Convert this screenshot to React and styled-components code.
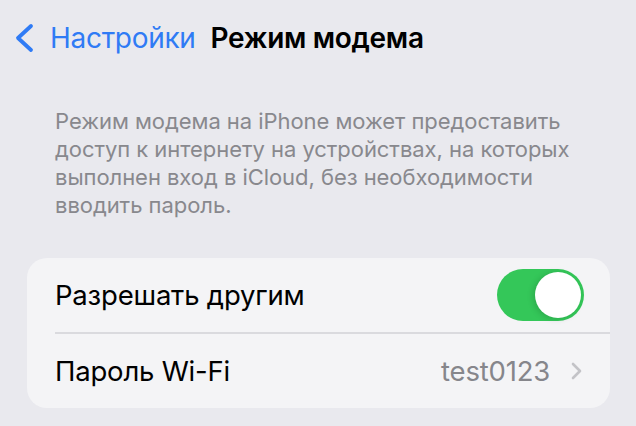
import React from 'react';
import styled, { createGlobalStyle } from 'styled-components';

const GlobalStyle = createGlobalStyle`
  html, body {
    margin: 0;
    padding: 0;
    background: #e9e9ee;
  }
  body {
    font-family: Inter, 'Noto Sans', sans-serif;
    -webkit-font-smoothing: antialiased;
  }
`;

const Page = styled.div`
  width: 636px;
  height: 426px;
  overflow: hidden;
  background: #e9e9ee;
`;

const NavBar = styled.div`
  display: flex;
  align-items: center;
  height: 40px;
  padding: 18px 0 0 14px;
`;

const BackButton = styled.div`
  display: flex;
  align-items: center;
  gap: 15px;
  color: #2f7bf5;
  font-size: 28px;
  letter-spacing: -0.3px;
`;

const Title = styled.div`
  margin-left: 15px;
  font-size: 28px;
  font-weight: 600;
  color: #000;
  letter-spacing: -0.3px;
`;

const Footnote = styled.p`
  margin: 49px 0 0 55px;
  width: 540px;
  font-size: 22px;
  line-height: 28px;
  color: #88888d;
  letter-spacing: -0.05px;
`;

const Card = styled.div`
  margin: 39px 26px 0 27px;
  background: #f4f4f6;
  border-radius: 20px;
  overflow: hidden;
`;

const Row = styled.div`
  display: flex;
  align-items: center;
  height: ${(p) => p.h}px;
  padding: 0 26px 0 28px;
`;

const Divider = styled.div`
  height: 1.5px;
  margin-left: 28px;
  background: #dadade;
`;

const Label = styled.div`
  flex: 1;
  font-size: 27.5px;
  color: #000;
  letter-spacing: -0.2px;
`;

const Value = styled.div`
  font-size: 27.5px;
  color: #86868b;
  margin-right: 20px;
  letter-spacing: -0.2px;
`;

const Toggle = styled.div`
  width: 87px;
  height: 52px;
  border-radius: 26px;
  background: #34c759;
  display: flex;
  align-items: center;
  justify-content: flex-end;
  padding: 0 3px;
  box-sizing: border-box;
`;

const Knob = styled.div`
  width: 46px;
  height: 46px;
  border-radius: 50%;
  background: #fff;
  box-shadow: -2px 1px 6px rgba(0, 0, 0, 0.15);
`;

const BackChevron = () => (
  <svg width="21" height="30" viewBox="0 0 21 30">
    <path d="M17 3 L4 15 L17 27" fill="none" stroke="#2f7bf5" strokeWidth="3.8" strokeLinecap="round" strokeLinejoin="round" />
  </svg>
);

const RowChevron = () => (
  <svg width="14" height="18" viewBox="0 0 14 18">
    <path d="M3 2 L10 9 L3 16" fill="none" stroke="#c3c3c7" strokeWidth="2.6" strokeLinecap="round" strokeLinejoin="round" />
  </svg>
);

export default function App() {
  return (
    <Page>
      <GlobalStyle />
      <NavBar>
        <BackButton>
          <BackChevron />
          Настройки
        </BackButton>
        <Title>Режим модема</Title>
      </NavBar>

      <Footnote>
        Режим модема на iPhone может предоставить доступ к интернету на устройствах, на которых выполнен вход в iCloud, без необходимости вводить пароль.
      </Footnote>

      <Card>
        <Row h={74}>
          <Label>Разрешать другим</Label>
          <Toggle>
            <Knob />
          </Toggle>
        </Row>
        <Divider />
        <Row h={74}>
          <Label>Пароль Wi-Fi</Label>
          <Value>test0123</Value>
          <RowChevron />
        </Row>
      </Card>
    </Page>
  );
}
